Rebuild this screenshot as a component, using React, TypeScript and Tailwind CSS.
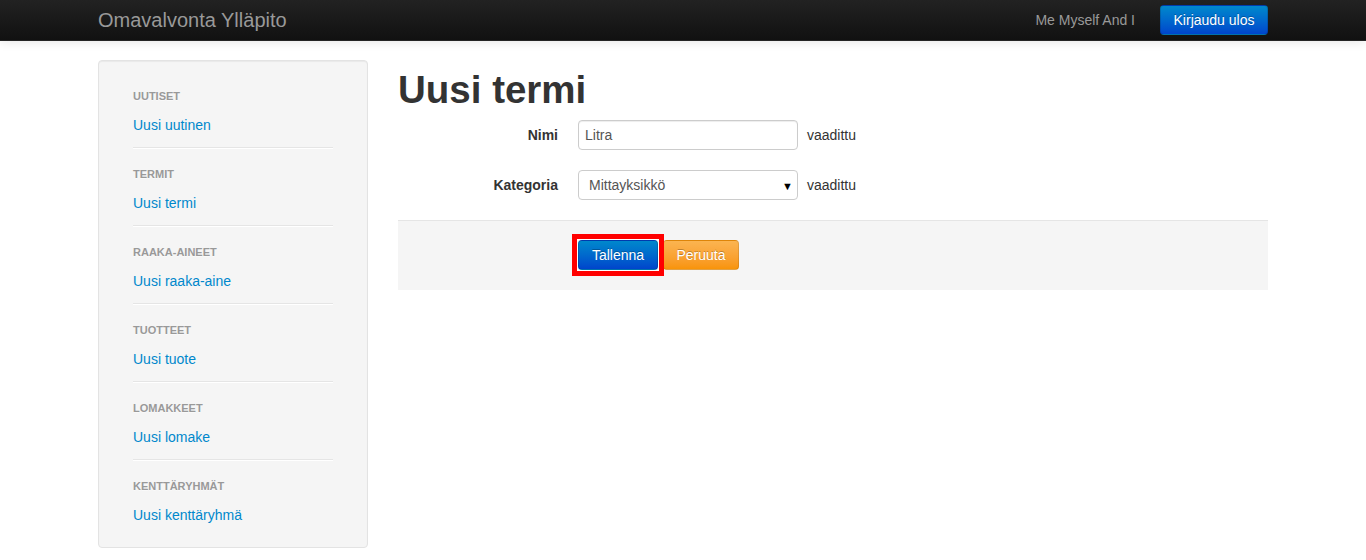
const font = "font-['Liberation_Sans',Arial,sans-serif]";

type GroupT = {
  header: string;
  link: string;
};

const groups: GroupT[] = [
  { header: "Uutiset", link: "Uusi uutinen" },
  { header: "Termit", link: "Uusi termi" },
  { header: "Raaka-aineet", link: "Uusi raaka-aine" },
  { header: "Tuotteet", link: "Uusi tuote" },
  { header: "Lomakkeet", link: "Uusi lomake" },
  { header: "Kenttäryhmät", link: "Uusi kenttäryhmä" },
];

function Navbar() {
  return (
    <div className="h-[41px] bg-gradient-to-b from-[#222222] to-[#111111] border-b border-[#252525] shadow-[0_1px_10px_rgba(0,0,0,0.1)]">
      <div className="w-[1170px] mx-auto flex items-center h-full">
        <a className="text-[20px] leading-[20px] text-[#999999] font-light">
          Omavalvonta Ylläpito
        </a>
        <span className="ml-auto text-[14px] text-[#999999]">
          Me Myself And I
        </span>
        <button className="ml-[25px] h-[30px] w-[108px] rounded-[4px] text-[14px] text-white bg-gradient-to-b from-[#0088cc] to-[#0044cc] border border-[rgba(0,0,0,0.15)] [text-shadow:0_-1px_0_rgba(0,0,0,0.25)]">
          Kirjaudu ulos
        </button>
      </div>
    </div>
  );
}

function Sidebar() {
  return (
    <div className="w-[270px] bg-[#f5f5f5] border border-[#e3e3e3] rounded-[4px] shadow-[inset_0_1px_1px_rgba(0,0,0,0.05)] px-[34px] pt-[25px] pb-[22px]">
      {groups.map((group, i) => (
        <div key={group.header}>
          <div className="h-5 leading-5 text-[11px] font-bold uppercase text-[#999999] [text-shadow:0_1px_0_rgba(255,255,255,0.5)]">
            {group.header}
          </div>
          <a className="block mt-[9px] h-5 leading-5 text-[14px] text-[#0088cc]">
            {group.link}
          </a>
          {i < groups.length - 1 && (
            <div className="mt-3 mb-[15px] h-px bg-[#e5e5e5] border-b border-white box-content" />
          )}
        </div>
      ))}
    </div>
  );
}

function FormRow({ label, children }: { label: string; children: React.ReactNode }) {
  return (
    <div className="flex items-center h-[30px] mb-5">
      <label className="w-[160px] text-right font-bold text-[14px] text-[#333333]">
        {label}
      </label>
      <div className="ml-5 flex items-center">
        {children}
        <span className="ml-[9px] text-[14px] text-[#333333]">vaadittu</span>
      </div>
    </div>
  );
}

function MainContent() {
  return (
    <div className="w-[870px]">
      <h1 className="mt-[10px] mb-[10px] text-[38.5px] leading-[40px] font-bold text-[#333333]">
        Uusi termi
      </h1>
      <FormRow label="Nimi">
        <input
          defaultValue="Litra"
          className="w-[220px] h-[30px] px-[6px] border border-[#cccccc] rounded-[4px] text-[14px] text-[#555555] bg-white shadow-[inset_0_1px_1px_rgba(0,0,0,0.075)] outline-none"
        />
      </FormRow>
      <FormRow label="Kategoria">
        <div className="relative w-[220px] h-[30px]">
          <select className="appearance-none w-full h-full pl-[10px] border border-[#cccccc] rounded-[4px] text-[14px] text-[#555555] bg-white outline-none">
            <option>Mittayksikkö</option>
          </select>
          <span className="absolute right-[5px] top-[6px] text-[11px] text-black pointer-events-none">
            ▼
          </span>
        </div>
      </FormRow>
      <div className="bg-[#f5f5f5] border-t border-[#e5e5e5] pt-[19px] pb-5 pl-[180px] flex">
        <button className="relative h-[30px] w-20 rounded-[4px] text-[14px] text-white bg-gradient-to-b from-[#0088cc] to-[#0044cc] border border-[rgba(0,0,0,0.15)] [text-shadow:0_-1px_0_rgba(0,0,0,0.25)]">
          Tallenna
          {/* highlight frame around the save button */}
          <span className="absolute -top-[7px] -bottom-[7px] -left-[7px] -right-[7px] border-[5px] border-[#ff0000] shadow-[inset_0_0_0_1px_#ffffff] pointer-events-none" />
        </button>
        <button className="ml-[5px] h-[30px] w-[76px] rounded-[4px] text-[14px] text-white bg-gradient-to-b from-[#fbb450] to-[#f89406] border border-[rgba(0,0,0,0.1)] [text-shadow:0_-1px_0_rgba(0,0,0,0.25)]">
          Peruuta
        </button>
      </div>
    </div>
  );
}

export default function App() {
  return (
    <div className={`${font} min-h-[560px] bg-white text-[14px] leading-5`}>
      <Navbar />
      <div className="w-[1170px] mx-auto mt-[19px] flex gap-[30px] items-start">
        <Sidebar />
        <MainContent />
      </div>
    </div>
  );
}
